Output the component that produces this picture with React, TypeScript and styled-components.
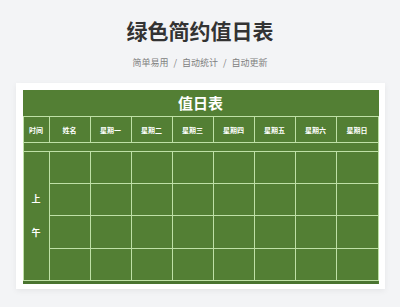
import styled, { createGlobalStyle } from 'styled-components';

const GlobalStyle = createGlobalStyle`
  html, body {
    margin: 0;
    padding: 0;
    background-color: #f3f4f6;
    font-family: "Noto Sans CJK SC", "Noto Sans", sans-serif;
  }
`;

const Page = styled.div`
  width: 400px;
  height: 307px;
  overflow: hidden;
  display: flex;
  flex-direction: column;
  align-items: center;
`;

const Title = styled.h1`
  margin: 15px 0 0;
  font-size: 21px;
  line-height: 30px;
  font-weight: 700;
  color: #333333;
`;

const Subtitle = styled.div`
  margin-top: 11px;
  font-size: 9px;
  line-height: 14px;
  color: #808080;
  display: flex;
  align-items: center;
`;

const Slash = styled.span`
  margin: 0 5px;
`;

const Card = styled.div`
  margin-top: 13px;
  width: 369px;
  box-sizing: border-box;
  padding: 7px 7px 5px;
  background-color: #ffffff;
  box-shadow: 0 2px 6px rgba(0, 0, 0, 0.06);
`;

const Sheet = styled.table`
  width: 355px;
  table-layout: fixed;
  border-collapse: collapse;
  background-color: #537f34;
  color: #ffffff;
`;

const Cell = styled.td<{ $h?: number }>`
  border: 1px solid #bfe0a6;
  height: ${(p) => (p.$h ? `${p.$h}px` : 'auto')};
  padding: 0;
  text-align: center;
  vertical-align: middle;
`;

const BandCell = styled.td`
  height: 26px;
  padding: 0;
  border-bottom: 1px solid #bfe0a6;
  text-align: center;
  font-size: 15px;
  font-weight: 700;
  line-height: 24px;
`;

const HeadCell = styled(Cell)`
  font-size: 7px;
  font-weight: 700;
`;

const TimeCell = styled(Cell)`
  font-size: 9px;
  font-weight: 700;
  line-height: 34px;
`;

const FootCell = styled.td`
  height: 3px;
  padding: 0;
  border-top: 1px solid #bfe0a6;
  background-color: #4a7430;
`;

const days = ['星期一', '星期二', '星期三', '星期四', '星期五', '星期六', '星期日'];
const widths = [26, 41, 41, 41, 41, 41, 41, 41, 42];
const bodyRows = [31, 31, 32, 31];

export default function App() {
  return (
    <Page>
      <GlobalStyle />
      <Title>绿色简约值日表</Title>
      <Subtitle>
        简单易用<Slash>/</Slash>自动统计<Slash>/</Slash>自动更新
      </Subtitle>
      <Card>
        <Sheet>
          <colgroup>
            {widths.map((w, i) => (
              <col key={i} style={{ width: w }} />
            ))}
          </colgroup>
          <tbody>
            <tr>
              <BandCell colSpan={9}>值日表</BandCell>
            </tr>
            <tr>
              <HeadCell $h={25}>时间</HeadCell>
              <HeadCell>姓名</HeadCell>
              {days.map((d) => (
                <HeadCell key={d}>{d}</HeadCell>
              ))}
            </tr>
            <tr>
              <Cell colSpan={9} $h={8} />
            </tr>
            {bodyRows.map((h, r) => (
              <tr key={r}>
                {r === 0 && (
                  <TimeCell rowSpan={4}>
                    上
                    <br />
                    午
                  </TimeCell>
                )}
                {widths.slice(1).map((_, c) => (
                  <Cell key={c} $h={h} />
                ))}
              </tr>
            ))}
            <tr>
              <FootCell colSpan={9} />
            </tr>
          </tbody>
        </Sheet>
      </Card>
    </Page>
  );
}
